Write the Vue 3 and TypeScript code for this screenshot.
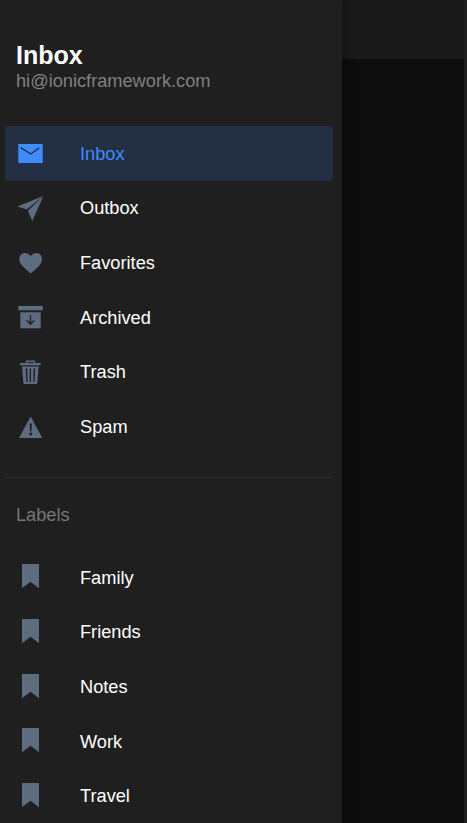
<script setup lang="ts">
type Row = { label: string; icon: string; active?: boolean }
const mail: Row[] = [
  { label: 'Inbox', icon: 'mail', active: true },
  { label: 'Outbox', icon: 'send' },
  { label: 'Favorites', icon: 'heart' },
  { label: 'Archived', icon: 'archive' },
  { label: 'Trash', icon: 'trash' },
  { label: 'Spam', icon: 'warning' },
]
const labels: string[] = ['Family', 'Friends', 'Notes', 'Work', 'Travel']
</script>

<template>
  <div class="screen">
    <aside class="drawer">
      <header class="head">
        <h1 class="title">Inbox</h1>
        <p class="mailaddr">hi@ionicframework.com</p>
      </header>
      <ul class="list main">
        <li v-for="r in mail" :key="r.label" class="row" :class="{ active: r.active }">
          <svg class="icon" viewBox="0 0 28 28" aria-hidden="true">
            <template v-if="r.icon === 'mail'">
              <path class="fill" d="M1.300 5h24.400v19H1.300z" />
              <path d="M3.700 8.700 13.700 15l8.600-6.300" fill="none" stroke="#232f43" stroke-width="1.400" />
            </template>
            <template v-else-if="r.icon === 'send'">
              <path class="fill" d="M26.300 2.100.3 12.400l9.500 3.200z" />
              <path class="fill" d="M26.300 2.100 11 16.800l4.300 10.300z" />
            </template>
            <path v-else-if="r.icon === 'heart'" class="fill" d="M13.700 24.400C9 20 2.300 16 2.300 10 2.300 6.600 4.800 4 8 4c2.400 0 4.500 1.200 5.700 3.300C14.900 5.200 17 4 19.400 4 22.600 4 25 6.600 25 10c0 6-6.600 10-11.300 14.400z" />
            <template v-else-if="r.icon === 'archive'">
              <path class="fill" d="M1.300 3h24.400v4.300H1.300z" />
              <path class="fill" d="M3.300 9.300h20.400v16H3.300z" />
              <path d="M13.500 12v9M9.700 17.300l3.800 3.900 3.800-3.900" fill="none" stroke="#1f1f1f" stroke-width="1.300" />
            </template>
            <template v-else-if="r.icon === 'trash'">
              <path class="fill" d="M3 5h20.700v2.300H3z" />
              <path d="M9.500 5.500V3.200h8v2.300" fill="none" stroke="#5e6c80" stroke-width="1.400" />
              <path class="fill" fill-rule="evenodd" d="M5 8.400h16.700L20.300 25q-.1 1-1.200 1H7.600q-1.100 0-1.200-1zM8.700 10.500l.7 13.500h1.300l-.5-13.500zM12.700 10.500V24H14V10.500zM16.700 10.500 16.200 24h1.300l.7-13.500z" />
            </template>
            <path v-else class="fill" fill-rule="evenodd" d="M13.700 3.400 25.300 25H2zM12.600 10.500l.4 8h1.400l.4-8zM13.700 19.600a1.400 1.400 0 1 0 0 2.800 1.400 1.400 0 0 0 0-2.800z" />
          </svg>
          <span class="text">{{ r.label }}</span>
        </li>
      </ul>
      <h2 class="section">Labels</h2>
      <ul class="list">
        <li v-for="l in labels" :key="l" class="row">
          <svg class="icon" viewBox="0 0 28 28" aria-hidden="true">
            <path class="fill" d="M5 1h17v24.300l-8.500-6.600L5 25.300z" />
          </svg>
          <span class="text">{{ l }}</span>
        </li>
      </ul>
    </aside>
    <main class="page">
      <div class="toolbar"></div>
      <div class="content"></div>
    </main>
  </div>
</template>

<style scoped>
.screen {
  display: flex;
  width: 467px;
  height: 823px;
  overflow: hidden;
  background: #0d0d0d;
  font-family: "Liberation Sans", Arial, sans-serif;
}
.drawer {
  box-sizing: border-box;
  position: relative;
  flex: 0 0 342px;
  height: 823px;
  overflow: hidden;
  padding: 0 9px 0 5px;
  background: #1f1f1f;
  box-shadow: 4px 0 10px rgba(0, 0, 0, 0.2);
}
.head {
  padding: 41px 0 0 11px;
}
.title {
  margin: 0;
  font-size: 25.06px;
  line-height: 28px;
  font-weight: 700;
  color: #ffffff;
}
.mailaddr {
  margin: 1px 0 0;
  font-size: 18.22px;
  line-height: 22px;
  color: #808080;
}
.list {
  list-style: none;
  margin: 0;
  padding: 0;
}
.main {
  margin-top: 34px;
  padding-bottom: 23.5px;
  border-bottom: 1px solid #2e2e2e;
}
.row {
  display: flex;
  align-items: center;
  height: 54.67px;
  padding-left: 12px;
  border-radius: 4px;
  color: #ffffff;
  font-size: 18.22px;
}
.row.active {
  background: #232f43;
  color: #3f8cff;
}
.text {
  padding-top: 2px;
}
.icon {
  flex: 0 0 28px;
  width: 28px;
  height: 28px;
  margin-right: 35px;
}
.fill {
  fill: #5e6c80;
}
.active .fill {
  fill: #3f8cff;
}
.section {
  margin: 0;
  padding: 27px 0 0 11px;
  height: 44.5px;
  box-sizing: content-box;
  font-size: 18.22px;
  line-height: 21px;
  font-weight: 400;
  color: #757575;
}
.page {
  flex: 1;
  display: flex;
  flex-direction: column;
  border-right: 3px solid #1f1f1f;
}
.toolbar {
  height: 59px;
  flex: none;
  background: #191919;
}
.content {
  flex: 1;
  background: #0d0d0d;
}
</style>
